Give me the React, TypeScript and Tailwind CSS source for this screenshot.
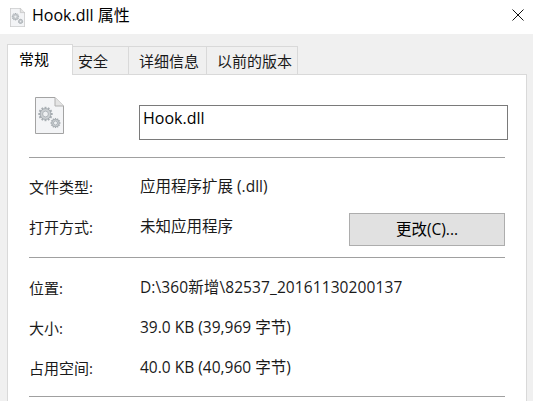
const font = { fontFamily: '"Open Sans", "Noto Sans CJK SC", sans-serif' };

function Gear({ cx, cy, r }: { cx: number; cy: number; r: number }) {
  const teeth = [0, 30, 60, 90, 120, 150];
  return (
    <g>
      {teeth.map((a) => (
        <rect key={a} x={cx - r * 0.16} y={cy - r * 1.2} width={r * 0.32} height={r * 2.4} fill="#a7adb2" transform={`rotate(${a} ${cx} ${cy})`} />
      ))}
      <circle cx={cx} cy={cy} r={r * 0.9} fill="#ccd0d3" stroke="#9aa1a6" strokeWidth="0.7" />
      <circle cx={cx} cy={cy} r={r * 0.48} fill="#eef0f2" stroke="#9aa1a6" strokeWidth="0.7" />
    </g>
  );
}

function FileIcon({ size }: { size: "lg" | "sm" }) {
  const cls = size === "lg" ? "w-[29px] h-[37px]" : "w-[15px] h-[19px]";
  return (
    <svg viewBox="0 0 29 37" className={cls}>
      <path d="M0.5 0.5H20L28.5 9V36.5H0.5Z" fill="#f3f4f6" stroke="#a3a3a3" />
      <path d="M20 0.5V9H28.5" fill="#e4e4e4" stroke="#b0b0b0" />
      <Gear cx={10.5} cy={17} r={6} />
      <Gear cx={20.5} cy={26} r={4.2} />
    </svg>
  );
}

function Row({ label, children }: { label: string; children: React.ReactNode }) {
  return (
    <div className="flex items-center h-10 text-[15.5px] text-[#1a1a1a]">
      <div className="w-[111px] shrink-0 text-[15px]">{label}</div>
      <div className="flex-1 flex items-center">{children}</div>
    </div>
  );
}

function Divider() {
  return <div className="h-px bg-[#a0a0a0] w-[476px]" />;
}

function Tab({ label, className, active }: { label: string; className: string; active?: boolean }) {
  if (active) {
    return (
      <div className={`${className} h-[31px] -mr-px relative z-10 bg-white border border-b-0 border-[#d9d9d9] flex items-center text-[15px] text-black pb-0.5`}>
        {label}
      </div>
    );
  }
  return (
    <div className={`${className} h-[28px] mb-px pt-px bg-[#f0f0f0] border border-b-0 border-l-0 border-[#d9d9d9] flex items-center text-[15px] text-[#1a1a1a]`}>
      {label}
    </div>
  );
}

export default function App() {
  return (
    <div className="w-[533px] h-[401px] overflow-hidden bg-[#f0f0f0] flex flex-col" style={font}>
      {/* title bar */}
      <div className="h-[34px] shrink-0 bg-white flex items-center pl-[10px] pr-[9px]">
        <FileIcon size="sm" />
        <span className="ml-[7px] text-[16px] text-black -mt-[4px]">Hook.dll 属性</span>
        <svg viewBox="0 0 12 12" className="ml-auto w-[12px] h-[12px] -mt-[4px]" fill="none" stroke="#111" strokeWidth="1">
          <path d="M0.5 0.5L11.5 11.5M11.5 0.5L0.5 11.5" />
        </svg>
      </div>

      <div className="flex-1 min-h-0 px-[6px] pt-[10px] pl-[7px]">
        {/* tabs */}
        <div className="flex items-end h-[31px] relative z-10 -mb-px">
          <Tab label="常规" className="w-[66px] pl-[11px]" active />
          <Tab label="安全" className="w-[57px] pl-[6px]" />
          <Tab label="详细信息" className="w-[78px] pl-[10px]" />
          <Tab label="以前的版本" className="w-[91px] pl-[10px]" />
        </div>

        {/* panel */}
        <div className="h-[400px] bg-white border border-[#d9d9d9] pl-[21px]">
          <div className="flex items-start h-[82px] pt-[30px]">
            <div className="w-[110px] pl-[6px] -mt-[8px]">
              <FileIcon size="lg" />
            </div>
            <div className="w-[369px] h-[35px] border border-[#7a7a7a] px-[3px] text-[16px] leading-[25px] text-black">Hook.dll</div>
          </div>
          <Divider />
          <div className="h-[9px]" />
          <Row label="文件类型:">应用程序扩展 (.dll)</Row>
          <Row label="打开方式:">
            <span className="w-[209px] shrink-0">未知应用程序</span>
            <div className="mt-[5px] w-[156px] h-[33px] bg-[#e1e1e1] border border-[#adadad] flex items-center justify-center text-black">更改(C)...</div>
          </Row>
          <div className="h-[10px]" />
          <Divider />
          <div className="h-[10px]" />
          <Row label="位置:">
            <span className="tracking-[0.1px]">D:\360新增\82537_20161130200137</span>
          </Row>
          <Row label="大小:">39.0 KB (39,969 字节)</Row>
          <Row label="占用空间:">40.0 KB (40,960 字节)</Row>
          <div className="h-[8px]" />
          <Divider />
        </div>
      </div>
    </div>
  );
}
